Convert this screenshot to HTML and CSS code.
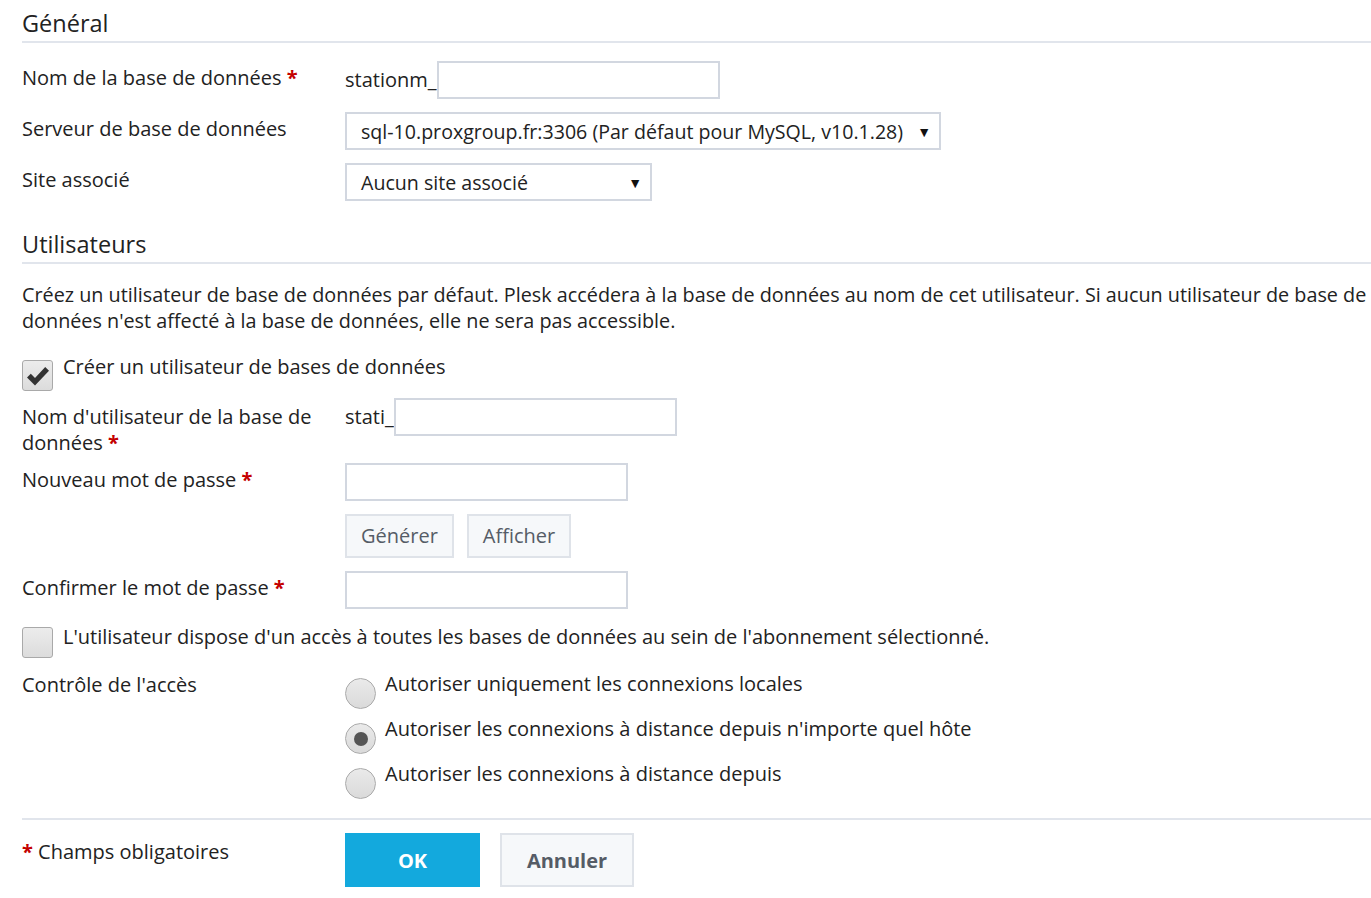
FILE: index.html
```html
<!DOCTYPE html>
<html lang="fr">
<head>
<meta charset="utf-8">
<title>Base de données</title>
<link rel="stylesheet" href="styles.css">
</head>
<body>
<div class="page">
  <h2 class="section-title">Général</h2>
  <div class="row row-first">
    <div class="label">Nom de la base de données <span class="req">*</span></div>
    <div class="field prefixed"><span class="prefix">stationm_</span><span class="input w283"></span></div>
  </div>
  <div class="row">
    <div class="label">Serveur de base de données</div>
    <div class="field"><div class="select w596"><span>sql-10.proxgroup.fr:3306 (Par défaut pour MySQL, v10.1.28)</span><span class="arrow">▼</span></div></div>
  </div>
  <div class="row">
    <div class="label">Site associé</div>
    <div class="field"><div class="select w307"><span>Aucun site associé</span><span class="arrow">▼</span></div></div>
  </div>

  <h2 class="section-title second">Utilisateurs</h2>
  <p class="hint">Créez un utilisateur de base de données par défaut. Plesk accédera à la base de données au nom de cet utilisateur. Si aucun utilisateur de base de<br>données n'est affecté à la base de données, elle ne sera pas accessible.</p>

  <div class="check-row check-first">
    <span class="checkbox checked"><svg viewBox="0 0 31 31" width="31" height="31"><path d="M5 17.5 L8.8 13.8 L13 18 L23.2 7 L27 10.8 L13 25.5 Z" fill="#333"/></svg></span>
    <span class="check-text">Créer un utilisateur de bases de données</span>
  </div>

  <div class="row row-user">
    <div class="label"><span class="line">Nom d'utilisateur de la base de</span><span class="line">données <span class="req">*</span></span></div>
    <div class="field prefixed"><span class="prefix">stati_</span><span class="input w283"></span></div>
  </div>
  <div class="row row-pass">
    <div class="label">Nouveau mot de passe <span class="req">*</span></div>
    <div class="field col">
      <span class="input w283"></span>
      <div class="btns">
        <span class="btn">Générer</span>
        <span class="btn">Afficher</span>
      </div>
    </div>
  </div>
  <div class="row row-confirm">
    <div class="label">Confirmer le mot de passe <span class="req">*</span></div>
    <div class="field"><span class="input w283"></span></div>
  </div>

  <div class="check-row check-second">
    <span class="checkbox"></span>
    <span class="check-text">L'utilisateur dispose d'un accès à toutes les bases de données au sein de l'abonnement sélectionné.</span>
  </div>

  <div class="row row-access">
    <div class="label">Contrôle de l'accès</div>
    <div class="field col radios">
      <div class="radio-row"><span class="radio"></span><span class="radio-text">Autoriser uniquement les connexions locales</span></div>
      <div class="radio-row"><span class="radio on"></span><span class="radio-text">Autoriser les connexions à distance depuis n'importe quel hôte</span></div>
      <div class="radio-row"><span class="radio"></span><span class="radio-text">Autoriser les connexions à distance depuis</span></div>
    </div>
  </div>

  <div class="footer">
    <div class="label"><span class="req">*</span> Champs obligatoires</div>
    <div class="field actions">
      <span class="btn-primary">OK</span>
      <span class="btn-cancel">Annuler</span>
    </div>
  </div>
</div>
</body>
</html>
```

FILE: styles.css
```css
html, body {
  margin: 0;
  padding: 0;
  background: #fff;
}
body {
  font-family: "Open Sans", "Noto Sans", sans-serif;
  font-size: 20px;
  color: #222;
  overflow: hidden;
}
.page {
  padding: 0 0 0 22px;
}
.section-title {
  margin: 0;
  font-weight: 400;
  font-size: 23.5px;
  line-height: 30px;
  padding-top: 8px;
  padding-bottom: 3px;
  border-bottom: 2px solid #e1e5ec;
  color: #222;
}
.section-title.second {
  margin-top: 20px;
}
.row {
  display: flex;
  align-items: flex-start;
  margin-top: 13px;
}
.row-first {
  margin-top: 18px;
}
.label {
  width: 323px;
  flex: none;
  line-height: 26px;
  padding-top: 4px;
}
.label .line {
  display: block;
}
.req {
  color: #c40000;
  font-weight: 700;
}
.field {
  display: flex;
  align-items: center;
}
.field.col {
  flex-direction: column;
  align-items: flex-start;
}
.prefix {
  line-height: 38px;
}
.input {
  display: block;
  height: 38px;
  box-sizing: border-box;
  border: 2px solid #d2d7e0;
  background: #fff;
}
.w283 { width: 283px; }
.select {
  height: 38px;
  box-sizing: border-box;
  border: 2px solid #d2d7e0;
  display: flex;
  align-items: center;
  justify-content: space-between;
  padding: 0 8px 0 14px;
  background: #fff;
  white-space: nowrap;
  font-size: 19.6px;
}
.w596 { width: 596px; }
.w307 { width: 307px; }
.arrow {
  font-size: 14px;
  color: #111;
}
.hint {
  margin: 18px 0 0 0;
  line-height: 26px;
  white-space: nowrap;
  font-size: 19.8px;
}
.check-row {
  display: flex;
  align-items: flex-start;
}
.check-first {
  margin-top: 25px;
}
.check-second {
  margin-top: 17px;
}
.checkbox {
  width: 31px;
  height: 31px;
  box-sizing: border-box;
  border: 1px solid #a9a9a9;
  border-radius: 3px;
  background: linear-gradient(#ececec, #dcdcdc);
  flex: none;
  position: relative;
  margin-top: 1px;
}
.checkbox svg {
  position: absolute;
  left: -1px;
  top: -1px;
}
.check-text {
  margin-left: 10px;
  line-height: 26px;
  margin-top: -5px;
}
.check-second .check-text {
  margin-top: -2px;
}
.row-user {
  margin-top: 7px;
}
.row-user .label {
  width: 300px;
  margin-right: 23px;
  padding-top: 6px;
}
.row-pass {
  margin-top: 7px;
}
.btns {
  display: flex;
  gap: 13px;
  margin-top: 13px;
}
.btn {
  height: 44px;
  box-sizing: border-box;
  border: 2px solid #dfe3e9;
  background: #f6f8fa;
  color: #555c66;
  padding: 0 14px;
  line-height: 40px;
}
.row-confirm {
  margin-top: 13px;
}
.row-access {
  margin-top: 14px;
}
.row-access .label {
  padding-top: 0;
}
.radios {
  gap: 13px;
  margin-top: 5px;
}
.radio-row {
  display: flex;
  align-items: flex-start;
}
.radio {
  width: 31px;
  height: 31px;
  box-sizing: border-box;
  border-radius: 50%;
  border: 1px solid #aaa;
  background: linear-gradient(#eaeaea, #dadada);
  flex: none;
  margin-top: 1px;
  display: flex;
  align-items: center;
  justify-content: center;
}
.radio.on::after {
  content: "";
  width: 14px;
  height: 14px;
  border-radius: 50%;
  background: #555;
}
.radio-text {
  margin-left: 9px;
  line-height: 26px;
  margin-top: -6px;
}
.footer {
  display: flex;
  align-items: flex-start;
  margin-top: 19px;
  border-top: 2px solid #e1e5ec;
  padding-top: 13px;
}
.footer .label {
  padding-top: 6px;
}
.actions {
  gap: 20px;
}
.btn-primary {
  width: 135px;
  height: 54px;
  background: #13a9dd;
  color: #fff;
  font-weight: 700;
  display: flex;
  align-items: center;
  justify-content: center;
}
.btn-cancel {
  width: 134px;
  height: 54px;
  box-sizing: border-box;
  border: 2px solid #dfe3e9;
  background: #f6f8fa;
  color: #555c66;
  font-weight: 700;
  display: flex;
  align-items: center;
  justify-content: center;
}
```
